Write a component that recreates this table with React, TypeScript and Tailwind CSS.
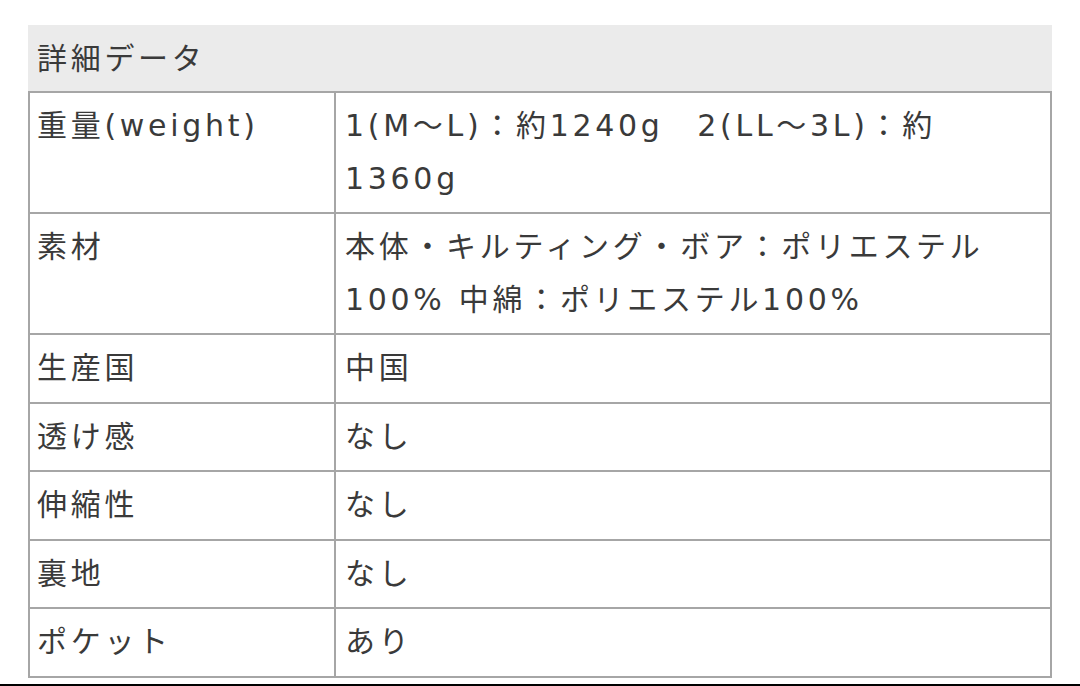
const rows: { label: string; value: React.ReactNode }[] = [
  {
    label: "重量(weight)",
    value: (
      <>
        1(M〜L)：約1240g　2(LL〜3L)：約
        <br />
        1360g
      </>
    ),
  },
  {
    label: "素材",
    value: (
      <>
        本体・キルティング・ボア：ポリエステル
        <br />
        100% 中綿：ポリエステル100%
      </>
    ),
  },
  { label: "生産国", value: "中国" },
  { label: "透け感", value: "なし" },
  { label: "伸縮性", value: "なし" },
  { label: "裏地", value: "なし" },
  { label: "ポケット", value: "あり" },
];

export default function App() {
  return (
    <div
      className="min-h-[686px] bg-white pt-[25px] text-[#3a3a3a] text-[30px] tracking-[3.7px]"
      style={{ fontFamily: '"DejaVu Sans", "Noto Sans CJK JP", sans-serif' }}
    >
      <div className="mx-[28px]">
        <div className="flex h-[66px] items-center bg-[#ebebeb] pl-[9px]">詳細データ</div>
        <table className="w-full border-collapse">
          <tbody>
            {rows.map((r) => (
              <tr key={r.label}>
                <td className="w-[306px] border-2 border-[#a6a6a6] px-[7px] py-[7px] align-top leading-[52.5px] whitespace-nowrap">
                  {r.label}
                </td>
                <td className="border-2 border-[#a6a6a6] px-[9px] py-[7px] align-top leading-[52.5px] whitespace-nowrap">
                  {r.value}
                </td>
              </tr>
            ))}
          </tbody>
        </table>
      </div>
      <div className="mt-[6px] border-t-[3px] border-black" />
    </div>
  );
}
